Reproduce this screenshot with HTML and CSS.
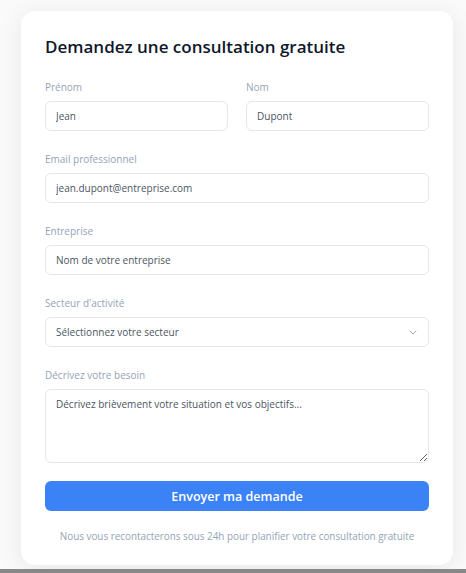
FILE: index.html
```html
<!DOCTYPE html>
<html lang="fr">
<head>
<meta charset="utf-8">
<title>Consultation gratuite</title>
<link rel="stylesheet" href="styles.css">
</head>
<body>
<div class="card">
  <h2 class="title">Demandez une consultation gratuite</h2>
  <form class="form">
    <div class="fields">
      <div class="row">
        <label class="field">
          <span class="label">Prénom</span>
          <input class="input" type="text" value="Jean">
        </label>
        <label class="field">
          <span class="label">Nom</span>
          <input class="input" type="text" value="Dupont">
        </label>
      </div>
      <label class="field">
        <span class="label">Email professionnel</span>
        <input class="input" type="email" value="jean.dupont@entreprise.com">
      </label>
      <label class="field">
        <span class="label">Entreprise</span>
        <input class="input" type="text" placeholder="Nom de votre entreprise">
      </label>
      <label class="field">
        <span class="label">Secteur d'activité</span>
        <span class="select-wrap">
          <select class="input select">
            <option>Sélectionnez votre secteur</option>
          </select>
          <svg class="chevron" width="8" height="5" viewBox="0 0 8 5" aria-hidden="true"><path d="M1 1l3 3 3-3" fill="none" stroke="#a3a9b3" stroke-width="1" stroke-linecap="round" stroke-linejoin="round"/></svg>
        </span>
      </label>
      <label class="field">
        <span class="label">Décrivez votre besoin</span>
        <textarea class="input textarea" placeholder="Décrivez brièvement votre situation et vos objectifs..."></textarea>
      </label>
    </div>
    <button class="button" type="button">Envoyer ma demande</button>
    <p class="note">Nous vous recontacterons sous 24h pour planifier votre consultation gratuite</p>
  </form>
</div>
</body>
</html>
```
FILE: styles.css
```css
html {
  background: #888888;
}
body {
  margin: 0;
  height: 569px;
  box-sizing: border-box;
  padding: 11px 0 0 21px;
  background: #fafafa;
  font-family: "Open Sans", "Noto Sans", sans-serif;
}
.card {
  width: 432px;
  box-sizing: border-box;
  background: #ffffff;
  border-radius: 14px;
  padding: 24px 24px 20px;
  box-shadow: 0 4px 26px rgba(0, 0, 0, 0.08);
}
.title {
  margin: 0 0 20px;
  font-size: 17px;
  line-height: 24px;
  font-weight: 600;
  color: #0f172a;
}
.form {
  display: flex;
  flex-direction: column;
  margin: 0;
}
.fields {
  display: flex;
  flex-direction: column;
  gap: 20px;
}
.row {
  display: grid;
  grid-template-columns: 1fr 1fr;
  gap: 18px;
}
.field {
  display: flex;
  flex-direction: column;
  gap: 6px;
}
.label {
  font-size: 10px;
  line-height: 16px;
  font-weight: 500;
  color: #94a3b8;
}
.input {
  display: block;
  width: 100%;
  height: 30px;
  box-sizing: border-box;
  margin: 0;
  border: 1px solid #e5e7eb;
  border-radius: 6px;
  padding: 0 10px;
  background: #ffffff;
  font-family: "Open Sans", "Noto Sans", sans-serif;
  font-size: 10px;
  color: #4b5563;
  outline: none;
}
.input::placeholder {
  color: #4b5563;
  opacity: 1;
}
.select-wrap {
  position: relative;
  display: block;
}
.select {
  appearance: none;
  -webkit-appearance: none;
}
.chevron {
  position: absolute;
  right: 12px;
  top: 13px;
}
.textarea {
  height: 74px;
  padding: 7px 10px;
  line-height: 14px;
  resize: vertical;
}
.button {
  margin-top: 18px;
  height: 30px;
  border: none;
  border-radius: 6px;
  background: #3b82f6;
  color: #ffffff;
  font-family: "Open Sans", "Noto Sans", sans-serif;
  font-size: 12.5px;
  font-weight: 600;
}
.note {
  margin: 16px 0 0;
  text-align: center;
  font-size: 9.9px;
  line-height: 18px;
  color: #94a3b8;
}
```
